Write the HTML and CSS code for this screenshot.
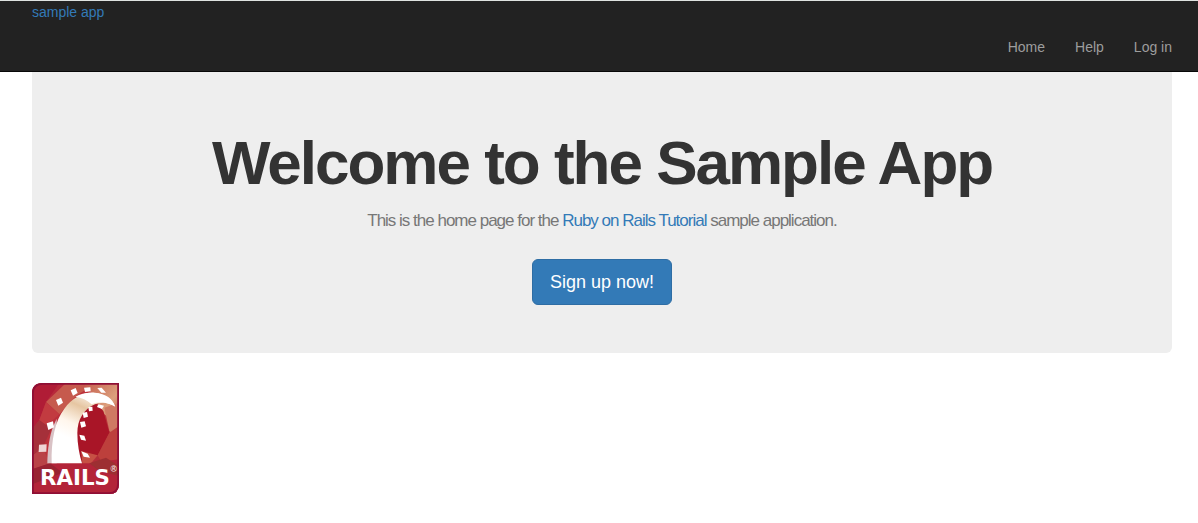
FILE: index.html
```html
<!DOCTYPE html>
<html lang="en">
<head>
    <meta charset="UTF-8">
    <meta name="viewport" content="width=device-width, initial-scale=1.0">
    <title>Sample App</title>
    <link rel="stylesheet" href="styles.css">
</head>
<body>
    <header class="navbar">
        <a href="#" class="brand">sample app</a>
        <nav>
            <ul class="nav-links">
                <li><a href="#">Home</a></li>
                <li><a href="#">Help</a></li>
                <li><a href="#">Log in</a></li>
            </ul>
        </nav>
    </header>

    <main class="container">
        <div class="jumbotron">
            <h1>Welcome to the Sample App</h1>
            <h2>
                This is the home page for the
                <a href="#">Ruby on Rails Tutorial</a>
                sample application.
            </h2>
            <button type="button" class="btn btn-primary">Sign up now!</button>
        </div>

        <a href="#" class="logo" aria-label="Rails">
            <svg width="87" height="111" viewBox="18 21 261 333">
                <defs>
                    <linearGradient id="ground" x1="0" y1="0" x2="1" y2="1">
                        <stop offset="0" stop-color="#b3203a"/>
                        <stop offset="0.5" stop-color="#c03a3c"/>
                        <stop offset="1" stop-color="#a01c35"/>
                    </linearGradient>
                    <linearGradient id="glow" x1="0" y1="0" x2="1" y2="1">
                        <stop offset="0" stop-color="#c4594b"/>
                        <stop offset="0.6" stop-color="#dca07c"/>
                        <stop offset="1" stop-color="#bd4942"/>
                    </linearGradient>
                    <linearGradient id="track" x1="0.7" y1="0" x2="0.3" y2="1">
                        <stop offset="0" stop-color="#ffffff"/>
                        <stop offset="0.25" stop-color="#e6c6a2"/>
                        <stop offset="0.5" stop-color="#fff6ec"/>
                        <stop offset="0.7" stop-color="#ffffff"/>
                    </linearGradient>
                    <clipPath id="badge">
                        <path d="M50 21H279V324Q279 354 249 354H18V53Q18 21 50 21Z"/>
                    </clipPath>
                </defs>
                <g clip-path="url(#badge)">
                    <rect x="18" y="21" width="261" height="333" fill="url(#ground)"/>
                    <path d="M18 21H100L60 78L40 132L18 160Z" fill="#b01c36"/>
                    <path d="M60 78L120 21H210L150 60L100 115Z" fill="#c65a4d"/>
                    <path d="M60 78L100 115L58 152L40 132Z" fill="#c23b40"/>
                    <path d="M18 160L40 132L76 158L50 215L18 240Z" fill="#a5303a"/>
                    <path d="M18 240L50 215L72 262L40 290L18 280Z" fill="#b94347"/>
                    <path d="M170 21H279V150L235 115L205 60Z" fill="url(#glow)"/>
                    <path d="M235 95L279 80V190L250 165Z" fill="#cf7a63"/>
                    <path d="M150 100L205 78L232 105L250 170L215 238L160 262L148 190Z" fill="#a91527"/>
                    <path d="M250 170L279 150V280L232 268L215 238Z" fill="#bd403c"/>
                    <path d="M165 225L215 238L190 268H170Z" fill="#c65044"/>
                    <path d="M18 280L72 262H190L279 250V354H18Z" fill="#b32439"/>
                    <path d="M72 262L110 290L18 325V280Z" fill="#992332"/>
                    <path d="M190 262L240 245L279 270V300L220 285Z" fill="#9d2f32"/>
                    <path d="M64 262C64 225 70 180 82 150L92 128V262Z" fill="#d9c2c5"/>
                    <!-- curved track -->
                    <path d="M77 262C75 190 88 133 115 98C139 65 174 47 207 50C239 52 261 69 267 91C246 79 227 77 207 85C173 99 154 132 154 171C154 205 160 235 168 262Z" fill="url(#track)"/>
                    <path d="M148 62C187 40 250 49 268 92C242 78 219 74 197 85C183 72 168 65 148 62Z" fill="#fff"/>
                    <!-- sleepers -->
                    <g fill="#fff">
                        <path d="M134 43L149 36L155 51L141 59Z"/>
                        <path d="M174 35L193 34L194 46L177 48Z"/>
                        <path d="M214 36L227 35L240 50L226 50Z"/>
                        <path d="M90 72L105 65L111 80L97 89Z"/>
                        <path d="M62 142L81 136L84 154L67 162Z"/>
                        <path d="M39 206L62 205L61 227L38 228Z" fill="#efd6d5"/>
                        <path d="M187 93L199 92L200 104L189 106Z"/>
                        <path d="M217 85L234 89L228 99L213 93Z"/>
                        <path d="M170 110L183 108L186 122L173 126Z"/>
                        <path d="M162 138L176 136L180 151L166 155Z"/>
                        <path d="M160 176L175 179L180 194L165 191Z"/>
                        <path d="M166 226L185 233L192 245L173 242Z"/>
                    </g>
                    <path d="M51 22H278V324Q278 353 249 353H19V53Q19 22 51 22Z" fill="none" stroke="#8f0f35" stroke-width="9"/>
                </g>
                <text x="147" y="327" text-anchor="middle" class="logo-name">RAILS</text>
                <text x="263" y="288" text-anchor="middle" class="logo-mark">®</text>
            </svg>
        </a>
    </main>
</body>
</html>
```

FILE: styles.css
```css
* {
    box-sizing: border-box;
}

body {
    margin: 0;
    font-family: "Helvetica Neue", Helvetica, "Liberation Sans", Arial, sans-serif;
    font-size: 14px;
    line-height: 20px;
    color: #333;
    background: #fff;
}

a {
    color: #337ab7;
    text-decoration: none;
}

a:hover {
    text-decoration: underline;
}

.navbar {
    padding: 1px 26px 0 32px;
    background: #222;
    border-top: 1px solid #dfe3e1;
    border-bottom: 1px solid #080808;
}

.brand {
    display: block;
}

.nav-links {
    display: flex;
    justify-content: flex-end;
    gap: 30px;
    margin: 0;
    padding: 15px 0 14px;
    list-style: none;
}

.nav-links a {
    color: #9d9d9d;
}

.nav-links a:hover {
    color: #fff;
}

.container {
    padding: 0 26px 30px 32px;
}

.jumbotron {
    padding: 56px 60px 48px;
    margin-bottom: 30px;
    text-align: center;
    background: #eee;
    border-radius: 0 0 6px 6px;
}

h1 {
    margin: 0 0 11px;
    font-size: 62px;
    font-weight: 700;
    line-height: 70px;
    letter-spacing: -2px;
}

h2 {
    margin: 0 0 26px;
    font-size: 17px;
    font-weight: 400;
    line-height: 24px;
    letter-spacing: -1px;
    color: #777;
}

.btn {
    padding: 10px 17px;
    border: 1px solid transparent;
    border-radius: 6px;
    font-family: inherit;
    font-size: 18px;
    line-height: 24px;
    cursor: pointer;
}

.btn-primary {
    color: #fff;
    background: #337ab7;
    border-color: #2e6da4;
}

.btn-primary:hover {
    background: #286090;
}

.logo {
    display: inline-block;
}

.logo svg {
    display: block;
}

.logo-name {
    font-family: "DejaVu Sans", sans-serif;
    font-size: 64px;
    font-weight: 700;
    fill: #fff;
}

.logo-mark {
    font-size: 26px;
    font-weight: 700;
    fill: #f3dcdc;
}
```
